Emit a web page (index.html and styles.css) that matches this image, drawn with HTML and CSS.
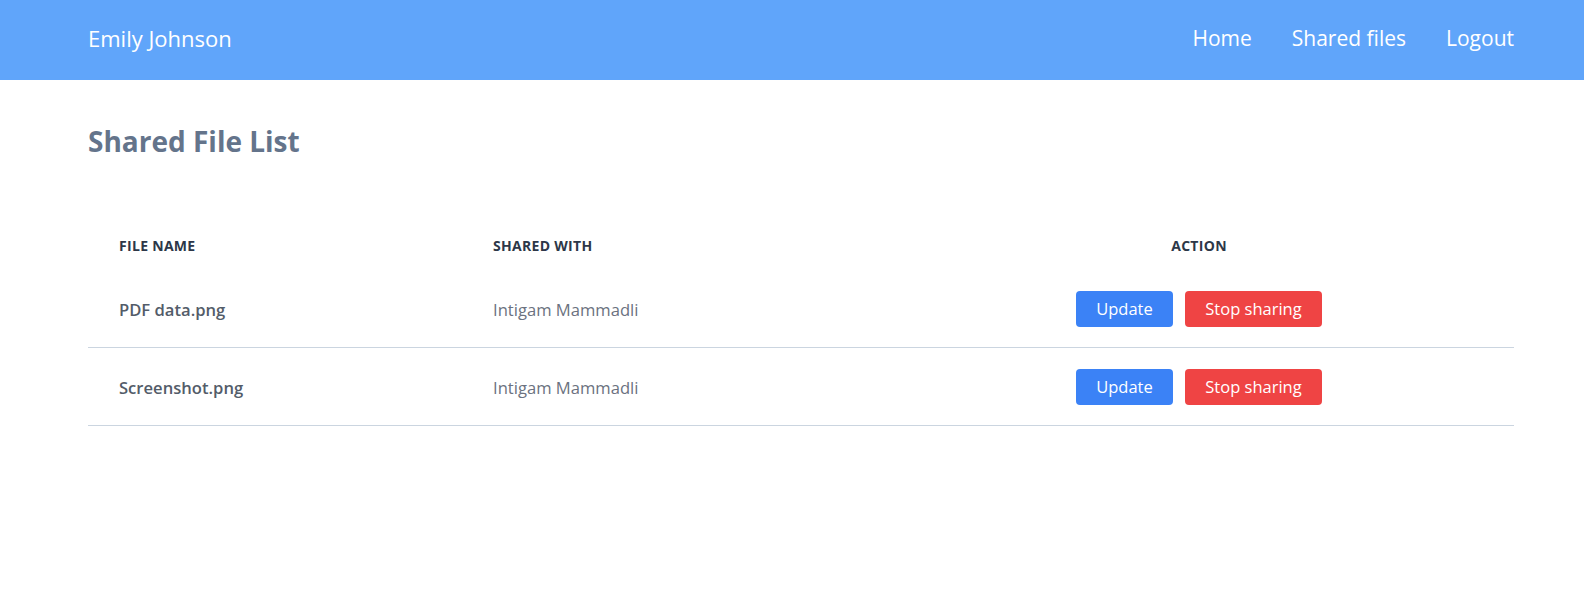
FILE: index.html
```html
<!DOCTYPE html>
<html lang="en">
<head>
<meta charset="utf-8">
<title>Shared File List</title>
<link rel="stylesheet" href="styles.css">
</head>
<body>
<nav class="navbar">
  <a class="brand" href="#">Emily Johnson</a>
  <div class="nav-links">
    <a href="#">Home</a>
    <a href="#">Shared files</a>
    <a href="#">Logout</a>
  </div>
</nav>
<main class="content">
  <h1 class="title">Shared File List</h1>
  <div class="table">
    <div class="row head">
      <div class="cell">File Name</div>
      <div class="cell">Shared With</div>
      <div class="cell center">Action</div>
    </div>
    <div class="row body">
      <div class="cell file">PDF data.png</div>
      <div class="cell user">Intigam Mammadli</div>
      <div class="cell actions"><button class="btn btn-blue">Update</button><button class="btn btn-red">Stop sharing</button></div>
    </div>
    <div class="row body">
      <div class="cell file">Screenshot.png</div>
      <div class="cell user">Intigam Mammadli</div>
      <div class="cell actions"><button class="btn btn-blue">Update</button><button class="btn btn-red">Stop sharing</button></div>
    </div>
  </div>
</main>
</body>
</html>
```
FILE: styles.css
```css
* { box-sizing: border-box; }
html, body { margin: 0; padding: 0; background: #fff; }
body { font-family: "Open Sans", "Noto Sans", sans-serif; }

.navbar {
  height: 80px;
  background: #60a5fa;
  display: flex;
  align-items: center;
  justify-content: space-between;
  padding: 0 70px 5px 88px;
}
.navbar a { color: #fff; text-decoration: none; font-size: 21px; }
.navbar .brand { font-size: 22px; }
.nav-links { display: flex; gap: 40px; }

.content { padding: 43px 70px 0 88px; }
.title {
  margin: 0;
  font-size: 28px;
  line-height: 36px;
  font-weight: 700;
  color: #64748b;
}

.table { margin-top: 59px; }
.row {
  display: grid;
  grid-template-columns: 374px 422px 1fr;
  align-items: center;
}
.cell { padding-left: 31px; }
.head .cell {
  padding-top: 18px;
  padding-bottom: 14px;
  font-size: 14px;
  line-height: 20px;
  font-weight: 700;
  letter-spacing: 0.3px;
  text-transform: uppercase;
  color: #2d3748;
}
.head .cell.center { text-align: center; padding-left: 0; }
.body { padding: 20px 0; border-bottom: 1px solid #cbd5e0; }
.body .cell { font-size: 16.6px; line-height: 35px; padding-top: 2px; }
.body .cell.actions { line-height: 37px; padding-top: 0; }
.file { font-weight: 600; color: #535c69; }
.user { color: #6b7280; }
.actions {
  display: flex;
  justify-content: center;
  gap: 12px;
  padding-left: 0;
}
.btn {
  height: 36px;
  border: none;
  border-radius: 4px;
  color: #fff;
  font-family: inherit;
  font-size: 16.5px;
  padding: 0;
  cursor: pointer;
}
.btn-blue { background: #3b82f6; width: 97px; }
.btn-red { background: #ef4444; width: 137px; }
```
